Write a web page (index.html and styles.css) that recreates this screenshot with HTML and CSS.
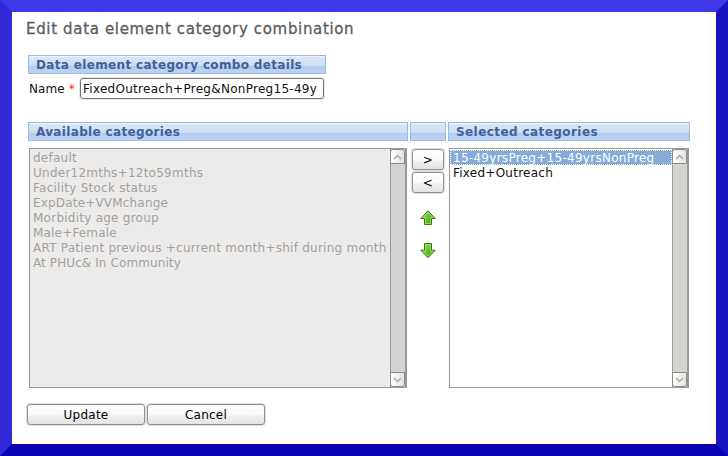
FILE: index.html
```html
<!DOCTYPE html>
<html lang="en">
<head>
<meta charset="utf-8">
<title>Edit data element category combination</title>
<link rel="stylesheet" href="styles.css">
</head>
<body>
<main class="frame">
  <h1 class="title">Edit data element category combination</h1>
  <h2 class="bar details">Data element category combo details</h2>
  <div class="name-row">
    <label class="name">Name <em>*</em></label>
    <div class="input">FixedOutreach+Preg&amp;NonPreg15-49y</div>
  </div>
  <div class="picker">
    <h2 class="bar">Available categories</h2>
    <div class="bar"></div>
    <h2 class="bar wide">Selected categories</h2>
    <div class="list disabled">
      <ul>
        <li>default</li>
        <li>Under12mths+12to59mths</li>
        <li>Facility Stock status</li>
        <li class="snug">ExpDate+VVMchange</li>
        <li>Morbidity age group</li>
        <li class="snug">Male+Female</li>
        <li>ART Patient previous +current month+shif during month</li>
        <li class="tight">At PHUc&amp; In Community</li>
      </ul>
      <div class="scroll">
        <div class="cap up"><svg width="9" height="6" viewBox="0 0 9 6"><path d="M1 5 4.500 1.500 8 5"/></svg></div>
        <div class="cap down"><svg width="9" height="6" viewBox="0 0 9 6"><path d="M1 1 4.500 4.500 8 1"/></svg></div>
      </div>
    </div>
    <div class="moves">
      <button class="btn small">&gt;</button>
      <button class="btn small">&lt;</button>
      <svg class="arrow first" width="16" height="16" viewBox="0 0 16 16">
        <defs><linearGradient id="g" x1="0" y1="0" x2="1" y2="1"><stop offset="0" stop-color="#a6df6e"/><stop offset=".5" stop-color="#65bd32"/><stop offset="1" stop-color="#3ea000"/></linearGradient></defs>
        <path class="edge" d="M8 .8 15.200 8.500H11.500V14.500H4.500V8.500H.8Z" fill="url(#g)"/>
        <path class="shine" d="M8 2.300 13 7.500H10.500V13.500H5.500V7.500H3Z"/>
      </svg>
      <svg class="arrow" width="16" height="16" viewBox="0 0 16 16">
        <path class="edge" d="M8 14.700 15.200 7.200H11.500V.5H4.500V7.200H.8Z" fill="url(#g)"/>
        <path class="shine" d="M8 13.200 13 8.200H10.500V1.500H5.500V8.200H3Z"/>
      </svg>
    </div>
    <div class="list">
      <ul>
        <li class="selected">15-49yrsPreg+15-49yrsNonPreg</li>
        <li>Fixed+Outreach</li>
      </ul>
      <div class="scroll">
        <div class="cap up"><svg width="9" height="6" viewBox="0 0 9 6"><path d="M1 5 4.500 1.500 8 5"/></svg></div>
        <div class="cap down"><svg width="9" height="6" viewBox="0 0 9 6"><path d="M1 1 4.500 4.500 8 1"/></svg></div>
      </div>
    </div>
  </div>
  <div class="actions">
    <button class="btn">Update</button>
    <button class="btn">Cancel</button>
  </div>
</main>
</body>
</html>
```

FILE: styles.css
```css
* { box-sizing: border-box; }
body {
  margin: 0;
  font: 12px/15px "DejaVu Sans", sans-serif;
  color: #111;
  background: #fff;
}
.frame {
  width: 728px;
  height: 456px;
  border: 12px solid;
  border-color: #3f38e8 #1913c0 #0b02b4 #3129d8;
  padding: 8px 0 0 16px;
  overflow: hidden;
}
h1, h2, ul { margin: 0; padding: 0; }
.title {
  font-size: 15px;
  line-height: 18px;
  font-weight: normal;
  letter-spacing: .66px;
  -webkit-text-stroke: .3px #5c5c5c;
  color: #5c5c5c;
  margin: 0 0 17px -2px;
  white-space: nowrap;
}
.bar {
  height: 19px;
  border: 1px solid #98b9e8;
  padding-left: 7px;
  font-size: 12px;
  line-height: 19px;
  font-weight: bold;
  letter-spacing: .34px;
  color: #40609a;
  white-space: nowrap;
  background: linear-gradient(#edf4fb 0 1px, #dbe7f6 1px, #cbdcf2 10px, #b2cbed 10px, #bfd3f1 17px);
}
.wide { letter-spacing: .42px; }
.details { width: 298px; }
.name-row { display: flex; margin-top: 4px; height: 21px; }
.name { width: 52px; padding-left: 1px; line-height: 22px; white-space: nowrap; letter-spacing: .1px; }
.name em { color: #f22; font-style: normal; }
.input {
  width: 244px;
  height: 21px;
  border: 1px solid #777571;
  border-radius: 3px;
  padding-left: 2px;
  line-height: 20px;
  letter-spacing: .28px;
  box-shadow: 0 0 0 1px #eae8e6;
  white-space: nowrap;
  overflow: hidden;
}
.picker {
  display: grid;
  grid-template-columns: 380px 36px 242px;
  grid-template-rows: 19px 240px;
  gap: 7px 2px;
  margin-top: 23px;
}
.list {
  display: flex;
  margin: 0 1px;
  border: 1px solid #999895;
  background: #fff;
}
.list ul { flex: 1; list-style: none; padding-top: 1px; }
.list li {
  height: 15px;
  padding-left: 3px;
  line-height: 17px;
  letter-spacing: .25px;
  white-space: nowrap;
}
.list .snug { letter-spacing: .18px; }
.list .tight { letter-spacing: .1px; }
.list.disabled { background: #ecebea; color: #a3a19e; }
.list .selected {
  background: #86abd9;
  color: #fff;
  letter-spacing: .28px;
  outline: 1px dotted #fff;
  outline-offset: -1px;
}
.scroll {
  display: flex;
  flex-direction: column;
  justify-content: space-between;
  width: 16px;
  background: #d4d3d1;
  border-left: 1px solid #999895;
  border-right: 1px solid #999895;
}
.cap {
  display: grid;
  place-items: center;
  width: 15px;
  height: 15px;
  margin-left: -1px;
  border: 1px solid #8e8c89;
  background: linear-gradient(90deg, #fff, #e4e3e1);
}
.up { border-radius: 3px 3px 0 0; }
.down { border-radius: 0 0 3px 3px; }
.cap path { fill: none; stroke: #aaa9a6; stroke-width: 1.500; }
.moves { display: flex; flex-direction: column; align-items: center; padding-top: 1px; }
.btn {
  width: 118px;
  height: 21px;
  padding: 1px 0 0;
  border: 1px solid #92908c;
  border-radius: 3px;
  background: linear-gradient(#fff, #fafafa 50%, #f0efee 60%, #e5e3e1);
  box-shadow: 0 0 0 1px #e2e0de;
  color: #000;
  font: 12px/19px "DejaVu Sans", sans-serif;
  letter-spacing: .25px;
}
.btn.small { width: 32px; margin-bottom: 2px; }
.arrow { display: block; margin-top: 17px; }
.arrow.first { margin-top: 15px; }
.edge { stroke: #2c7d08; }
.shine { fill: none; stroke: #b8e88c; stroke-opacity: .65; }
.actions { display: flex; gap: 2px; margin: 16px 0 0 -1px; }
```
